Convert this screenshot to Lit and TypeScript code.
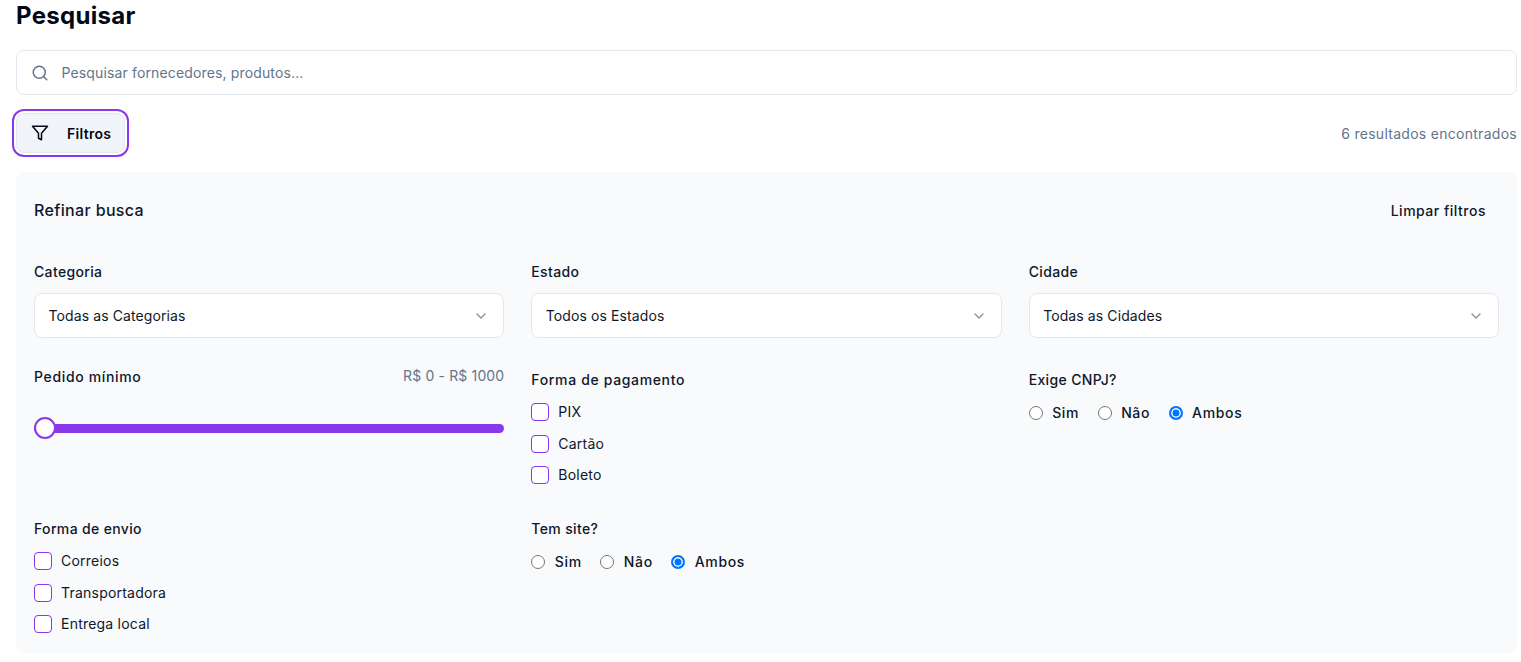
import { LitElement, html, css } from 'lit';
import { customElement } from 'lit/decorators.js';

const chevron = html`<svg class="chev" width="16" height="16" viewBox="0 0 24 24" fill="none" stroke="currentColor" stroke-width="2" stroke-linecap="round" stroke-linejoin="round"><path d="m6 9 6 6 6-6"/></svg>`;

@customElement('app-root')
export class AppRoot extends LitElement {
  static styles = css`
    :host {
      display: block;
      box-sizing: border-box;
      padding: 0 4px 9px 16px;
      font-family: Inter, 'Liberation Sans', sans-serif;
      color: #0f172a;
      background: #fff;
      font-size: 14px;
    }
    * {
      box-sizing: border-box;
    }
    svg {
      flex-shrink: 0;
    }
    h1 {
      margin: 0 0 18px;
      font-size: 24px;
      line-height: 32px;
      font-weight: 700;
      color: #020817;
      letter-spacing: 0.3px;
    }
    .search {
      display: flex;
      align-items: center;
      height: 45px;
      padding: 0 14px;
      gap: 12.5px;
      border: 1px solid #e2e8f0;
      border-radius: 8px;
      color: #64748b;
      letter-spacing: 0.14px;
    }
    .bar {
      display: flex;
      align-items: center;
      justify-content: space-between;
      margin: 17px 0 18px;
    }
    .filter-btn {
      display: flex;
      align-items: center;
      gap: 18px;
      width: 109px;
      height: 40px;
      margin: 1px 0 1px 0;
      padding: 0 14px;
      background: #f1f5f9;
      border: 1px solid #e2e8f0;
      border-radius: 8px;
      font-weight: 600;
      color: #020817;
      letter-spacing: 0.3px;
      box-shadow: 0 0 0 2px #fff, 0 0 0 4px #8a38ec;
    }
    .count {
      color: #64748b;
      letter-spacing: 0.28px;
    }
    .panel {
      background: #f8fafc;
      border-radius: 8px;
      padding: 18px 18px 19px;
    }
    .panel-head {
      display: flex;
      justify-content: space-between;
      align-items: center;
      height: 40px;
      margin-bottom: 32px;
    }
    .panel-head h2 {
      margin: 0;
      font-size: 16px;
      font-weight: 500;
      letter-spacing: 0.35px;
    }
    .clear {
      font-weight: 500;
      padding: 0 13px;
      letter-spacing: 0.5px;
    }
    .grid {
      display: grid;
      grid-template-columns: repeat(3, 1fr);
      column-gap: 27px;
    }
    .label {
      font-weight: 500;
      line-height: 20px;
      letter-spacing: 0.35px;
    }
    .label.wide {
      letter-spacing: 0.65px;
    }
    .cell {
      display: flex;
      flex-direction: column;
    }
    .select {
      display: flex;
      align-items: center;
      justify-content: space-between;
      height: 45px;
      margin-top: 11px;
      padding: 0 14px 0 13.5px;
      background: #fff;
      border: 1px solid #e2e8f0;
      border-radius: 8px;
      letter-spacing: 0.1px;
    }
    .chev {
      color: #8a8f98;
    }
    .row-2 {
      padding-top: 29px;
    }
    .row-2b {
      padding-top: 32px;
    }
    .row-3 {
      padding-top: 34px;
    }
    .range-head {
      display: flex;
      justify-content: space-between;
    }
    .range-val {
      color: #64748b;
      letter-spacing: 0.15px;
    }
    .slider {
      position: relative;
      height: 9px;
      margin-top: 37px;
      background: #8a38ec;
      border-radius: 5px;
    }
    .thumb {
      position: absolute;
      left: 0;
      top: -7px;
      width: 22px;
      height: 22px;
      background: #fff;
      border: 2px solid #8a38ec;
      border-radius: 50%;
    }
    .checks {
      display: flex;
      flex-direction: column;
      gap: 11.5px;
      margin-top: 12px;
    }
    .check {
      display: flex;
      align-items: center;
      gap: 9px;
      line-height: 20px;
      letter-spacing: 0.22px;
    }
    .box {
      width: 18px;
      height: 18px;
      background: #fff;
      border: 1px solid #8a38ec;
      border-radius: 4px;
    }
    .radios {
      display: flex;
      gap: 18.5px;
      margin-top: 13px;
    }
    .radio {
      display: flex;
      align-items: center;
      gap: 9.5px;
      font-weight: 500;
      line-height: 20px;
      letter-spacing: 0.65px;
    }
    .dot {
      width: 14px;
      height: 14px;
      background: #fff;
      border: 1px solid #767676;
      border-radius: 50%;
    }
    .dot.on {
      border: 2px solid #0075ff;
      box-shadow: inset 0 0 0 1.5px #fff;
      background: #0075ff;
    }
  `;

  private radios() {
    return html`<div class="radios">
      <div class="radio"><span class="dot"></span>Sim</div>
      <div class="radio"><span class="dot"></span>Não</div>
      <div class="radio"><span class="dot on"></span>Ambos</div>
    </div>`;
  }

  private checks(items: string[]) {
    return html`<div class="checks">
      ${items.map(i => html`<div class="check"><span class="box"></span>${i}</div>`)}
    </div>`;
  }

  private select(label: string, value: string) {
    return html`<div class="cell">
      <div class="label">${label}</div>
      <div class="select">${value}${chevron}</div>
    </div>`;
  }

  render() {
    return html`
      <h1>Pesquisar</h1>
      <div class="search">
        <svg width="18" height="18" viewBox="0 0 24 24" fill="none" stroke="#64748b" stroke-width="2" stroke-linecap="round" stroke-linejoin="round"><circle cx="11" cy="11" r="8"/><path d="m21 21-4.3-4.3"/></svg>
        Pesquisar fornecedores, produtos...
      </div>
      <div class="bar">
        <div class="filter-btn">
          <svg width="18" height="18" viewBox="0 0 24 24" fill="none" stroke="currentColor" stroke-width="2" stroke-linecap="round" stroke-linejoin="round"><polygon points="22 3 2 3 10 12.46 10 19 14 21 14 12.46 22 3"/></svg>
          Filtros
        </div>
        <div class="count">6 resultados encontrados</div>
      </div>
      <div class="panel">
        <div class="panel-head">
          <h2>Refinar busca</h2>
          <div class="clear">Limpar filtros</div>
        </div>
        <div class="grid">
          ${this.select('Categoria', 'Todas as Categorias')}
          ${this.select('Estado', 'Todos os Estados')}
          ${this.select('Cidade', 'Todas as Cidades')}
          <div class="cell row-2">
            <div class="range-head">
              <div class="label wide">Pedido mínimo</div>
              <div class="range-val">R$ 0 - R$ 1000</div>
            </div>
            <div class="slider"><span class="thumb"></span></div>
          </div>
          <div class="cell row-2b">
            <div class="label wide">Forma de pagamento</div>
            ${this.checks(['PIX', 'Cartão', 'Boleto'])}
          </div>
          <div class="cell row-2b">
            <div class="label">Exige CNPJ?</div>
            ${this.radios()}
          </div>
          <div class="cell row-3">
            <div class="label">Forma de envio</div>
            ${this.checks(['Correios', 'Transportadora', 'Entrega local'])}
          </div>
          <div class="cell row-3">
            <div class="label">Tem site?</div>
            ${this.radios()}
          </div>
        </div>
      </div>
    `;
  }
}
